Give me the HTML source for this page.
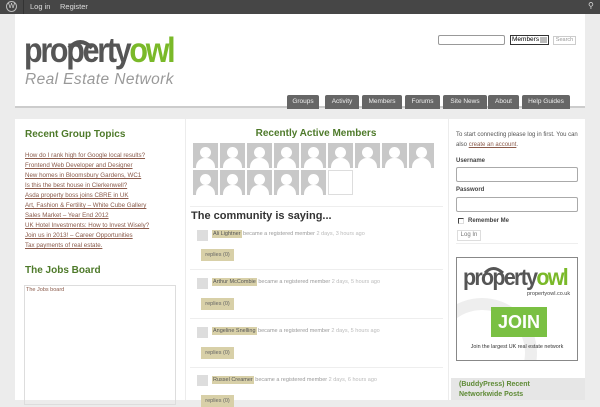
<!DOCTYPE html>
<html><head><meta charset="utf-8"><style>
*{margin:0;padding:0;box-sizing:border-box}
body{width:600px;height:400px;overflow:hidden;background:#ececec;font-family:"Liberation Sans",sans-serif;position:relative}
.a{position:absolute}
.bar{left:0;top:0;width:600px;height:14px;background:#464646}
.bar span{position:absolute;top:2px;color:#ddd;font-size:7.5px}
.hdr{left:15px;top:14px;width:570px;height:94px;background:#fff;border-bottom:2px solid #ccc}
.tab{top:95px;height:14px;background:#666;color:#eee;font-size:6.5px;text-align:center;line-height:14px;border-radius:2px 2px 0 0}
.col{background:#fff}
.lnk{color:#8a5a4a;text-decoration:underline;font-size:6.2px;line-height:10px}
h3{color:#4e7a2a;font-size:10px;font-weight:bold}
.av{width:25px;height:25px;background:#c8c8c8;overflow:hidden}
.av i{position:absolute;left:7px;top:4px;width:11px;height:11px;border-radius:50%;background:#fff}
.av b{position:absolute;left:3px;top:15px;width:19px;height:14px;border-radius:9px 9px 0 0;background:#fff}
.it{font-size:5.5px;color:#999}
.nm{background:#d8d0a8;color:#555;padding:1px}
.rep{background:#d8d0a8;color:#666;font-size:5.5px;width:33px;height:12px;line-height:12px;text-align:center}
.sav{width:11px;height:11px;background:#ddd}
.sep{height:1px;background:#eee}
.in{background:#fff;border:1px solid #aaa;border-radius:2px}
</style></head><body>
<div class="a bar">
<span style="left:6px;top:1px;width:11px;height:11px;border-radius:50%;border:1px solid #bbb;font-size:7px;text-align:center;line-height:10px">W</span>
<span style="left:23px;top:0;width:1px;height:14px;background:#333"></span>
<span style="left:30px">Log in</span><span style="left:60px">Register</span>
<span style="left:588px;color:#ddd;font-size:8px;top:1px">⚲</span>
</div>
<div class="a hdr"></div>
<svg class="a" style="left:24px;top:34px" width="160" height="36"><path d="M45 14 Q56 2 68 14" stroke="#555" stroke-width="4" fill="none"/></svg>
<div class="a" style="left:24px;top:31px;font-size:35px;font-weight:bold;letter-spacing:-2.6px;color:#555;line-height:40px;transform:scaleX(0.87);transform-origin:0 0">property<span style="color:#7ab929">owl</span></div>
<div class="a" style="left:25px;top:71px;font-size:15.5px;font-style:italic;color:#999;letter-spacing:.4px">Real Estate Network</div>
<div class="a in" style="left:438px;top:35px;width:67px;height:10px;border-color:#999"></div>
<div class="a" style="left:510px;top:35px;width:39px;height:10px;border:1px solid #333;font-size:6.5px;line-height:8px;padding-left:1px;background:#fff">Members<span style="position:absolute;right:1px;top:1px;width:7px;height:6px;background:#bbb"></span></div>
<div class="a" style="left:553px;top:36px;width:23px;height:9px;border:1px solid #ccc;font-size:5.5px;color:#999;text-align:center;line-height:7px">Search</div>
<div class="a tab" style="left:287px;width:32px">Groups</div>
<div class="a tab" style="left:325px;width:34px">Activity</div>
<div class="a tab" style="left:362px;width:40px">Members</div>
<div class="a tab" style="left:405px;width:35px">Forums</div>
<div class="a tab" style="left:443px;width:44px">Site News</div>
<div class="a tab" style="left:488px;width:31px">About</div>
<div class="a tab" style="left:522px;width:48px">Help Guides</div>

<div class="a col" style="left:15px;top:119px;width:170px;height:281px"></div>
<div class="a col" style="left:186px;top:119px;width:262px;height:281px"></div>
<div class="a col" style="left:449px;top:119px;width:136px;height:281px"></div>

<h3 class="a" style="left:25px;top:129px">Recent Group Topics</h3>
<div class="a" style="left:25px;top:151px">
<div class="lnk">How do I rank high for Google local results?</div>
<div class="lnk">Frontend Web Developer and Designer</div>
<div class="lnk">New homes in Bloomsbury Gardens, WC1</div>
<div class="lnk">Is this the best house in Clerkenwell?</div>
<div class="lnk">Asda property boss joins CBRE in UK</div>
<div class="lnk">Art, Fashion &amp; Fertility – White Cube Gallery</div>
<div class="lnk">Sales Market – Year End 2012</div>
<div class="lnk">UK Hotel Investments: How to Invest Wisely?</div>
<div class="lnk">Join us in 2013! – Career Opportunities</div>
<div class="lnk">Tax payments of real estate.</div>
</div>
<h3 class="a" style="left:25px;top:265px">The Jobs Board</h3>
<div class="a" style="left:24px;top:285px;width:152px;height:120px;border:1px solid #ddd;font-size:5.5px;color:#8a5a4a;padding:1px">The Jobs board</div>

<h3 class="a" style="left:185px;top:128px;width:262px;text-align:center">Recently Active Members</h3>
<div class="a" style="left:193px;top:143px;width:250px">
<div class="a av" style="left:0;top:0"><i></i><b></b></div><div class="a av" style="left:27px;top:0"><i></i><b></b></div><div class="a av" style="left:54px;top:0"><i></i><b></b></div><div class="a av" style="left:81px;top:0"><i></i><b></b></div><div class="a av" style="left:108px;top:0"><i></i><b></b></div><div class="a av" style="left:135px;top:0"><i></i><b></b></div><div class="a av" style="left:162px;top:0"><i></i><b></b></div><div class="a av" style="left:189px;top:0"><i></i><b></b></div><div class="a av" style="left:216px;top:0"><i></i><b></b></div>
<div class="a av" style="left:0;top:27px"><i></i><b></b></div><div class="a av" style="left:27px;top:27px"><i></i><b></b></div><div class="a av" style="left:54px;top:27px"><i></i><b></b></div><div class="a av" style="left:81px;top:27px"><i></i><b></b></div><div class="a av" style="left:108px;top:27px"><i></i><b></b></div>
<div class="a" style="left:135px;top:27px;width:25px;height:25px;border:1px solid #ddd"></div>
</div>
<div class="a sep" style="left:190px;top:206px;width:253px"></div>
<div class="a" style="left:191px;top:210px;font-size:11px;font-weight:bold;color:#333">The community is saying...</div>

<div class="a sav" style="left:197px;top:230px"></div>
<div class="a it" style="left:212px;top:231px"><span class="nm">Ali Lightner</span> became a registered member <span style="color:#bbb">2 days, 3 hours ago</span></div>
<div class="a rep" style="left:201px;top:249px">replies (0)</div>
<div class="a sep" style="left:190px;top:269px;width:253px"></div>
<div class="a sav" style="left:197px;top:278px"></div>
<div class="a it" style="left:212px;top:279px"><span class="nm">Arthur McCombie</span> became a registered member <span style="color:#bbb">2 days, 5 hours ago</span></div>
<div class="a rep" style="left:201px;top:298px">replies (0)</div>
<div class="a sep" style="left:190px;top:318px;width:253px"></div>
<div class="a sav" style="left:197px;top:327px"></div>
<div class="a it" style="left:212px;top:328px"><span class="nm">Angeline Snelling</span> became a registered member <span style="color:#bbb">2 days, 5 hours ago</span></div>
<div class="a rep" style="left:201px;top:347px">replies (0)</div>
<div class="a sep" style="left:190px;top:367px;width:253px"></div>
<div class="a sav" style="left:197px;top:375px"></div>
<div class="a it" style="left:212px;top:377px"><span class="nm">Russel Creamer</span> became a registered member <span style="color:#bbb">2 days, 6 hours ago</span></div>
<div class="a rep" style="left:201px;top:395px">replies (0)</div>

<div class="a" style="left:456px;top:130px;width:125px;font-size:6px;color:#555;line-height:10px">To start connecting please log in first. You can also <span class="lnk" style="font-size:6px">create an account</span>.</div>
<div class="a" style="left:456px;top:158px;font-size:6px;font-weight:bold;color:#444">Username</div>
<div class="a in" style="left:456px;top:167px;width:122px;height:15px"></div>
<div class="a" style="left:456px;top:187px;font-size:6px;font-weight:bold;color:#444">Password</div>
<div class="a in" style="left:456px;top:197px;width:122px;height:15px"></div>
<div class="a" style="left:458px;top:218px;width:6px;height:6px;border:1px solid #444;border-right-color:#ddd;border-bottom-color:#ddd"></div>
<div class="a" style="left:468px;top:218px;font-size:6px;font-weight:bold;color:#444">Remember Me</div>
<div class="a" style="left:457px;top:230px;width:24px;height:11px;border:1px solid #ddd;font-size:6px;color:#777;text-align:center;line-height:9px">Log In</div>
<div class="a sep" style="left:456px;top:243px;width:122px"></div>
<div class="a" style="left:456px;top:257px;width:122px;height:104px;border:1px solid #888;background:#fff;overflow:hidden">
<div class="a" style="left:-30px;top:40px;width:110px;height:110px;border-radius:50%;border:12px solid #eee"></div>
<svg class="a" style="left:6px;top:0" width="60" height="16"><path d="M22 15 Q30 6 40 15" stroke="#555" stroke-width="3" fill="none"/></svg>
<div class="a" style="left:6px;top:6px;font-size:23px;font-weight:bold;letter-spacing:-1.8px;color:#555;line-height:26px;transform:scaleX(0.93);transform-origin:0 0">property<span style="color:#7ab929">owl</span></div>
<div class="a" style="left:70px;top:33px;font-size:5.5px;color:#444">propertyowl.co.uk</div>
<div class="a" style="left:34px;top:49px;width:56px;height:30px;background:#7ac043;color:#fff;font-weight:bold;font-size:18px;text-align:center;line-height:30px">JOIN</div>
<div class="a" style="left:0;top:86px;width:120px;text-align:center;font-size:5.4px;color:#333">Join the largest UK real estate network</div>
</div>
<div class="a" style="left:451px;top:378px;width:134px;height:22px;background:#e6e6e6;padding:2px 8px;font-size:7px;font-weight:bold;color:#5e8a35;line-height:10px">(BuddyPress) Recent<br>Networkwide Posts</div>
</body></html>
